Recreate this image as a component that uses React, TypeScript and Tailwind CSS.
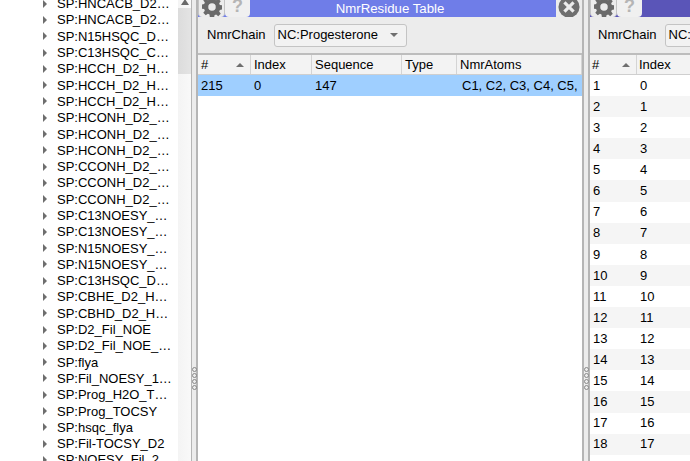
const font = "font-['Liberation_Sans',Arial,sans-serif]";

const tree = [
  "SP:HNCACB_D2…", "SP:HNCACB_D2…", "SP:N15HSQC_D…", "SP:C13HSQC_C…", "SP:HCCH_D2_H…", "SP:HCCH_D2_H…",
  "SP:HCCH_D2_H…", "SP:HCONH_D2_…", "SP:HCONH_D2_…", "SP:HCONH_D2_…", "SP:CCONH_D2_…", "SP:CCONH_D2_…",
  "SP:CCONH_D2_…", "SP:C13NOESY_…", "SP:C13NOESY_…", "SP:N15NOESY_…", "SP:N15NOESY_…", "SP:C13HSQC_D…",
  "SP:CBHE_D2_H…", "SP:CBHD_D2_H…", "SP:D2_Fil_NOE", "SP:D2_Fil_NOE_…", "SP:flya", "SP:Fil_NOESY_1…",
  "SP:Prog_H2O_T…", "SP:Prog_TOCSY", "SP:hsqc_flya", "SP:Fil-TOCSY_D2", "SP:NOESY_Fil_2",
];

function Gear({ className }: { className: string }) {
  return (
    <svg viewBox="0 0 24 24" className={className} fill="#6a6a6a">
      <path fillRule="evenodd" d="M9.500 0h5l.5 3.100 1.900.8L19.500 2l3 3-1.900 2.600.8 1.900 3.100.5v5l-3.100.5-.8 1.900 1.900 2.600-3 3-2.600-1.900-1.900.8-.5 3.100h-5L9 20.900l-1.900-.8L4.500 22l-3-3 1.900-2.600-.8-1.900L-.5 14V9l3.100-.5.8-1.900L1.500 4l3-2 2.600 1.900L9 3.100zM12 7.500a4.500 4.500 0 1 0 0 9 4.500 4.500 0 0 0 0-9z" />
    </svg>
  );
}

function Tabs() {
  return (
    <div className="flex h-[17px] w-[52px] shrink-0">
      <div className="flex h-full w-[27px] items-center justify-center rounded-b-sm border-x border-[#c4c4c4] bg-[#ececec]">
        <Gear className="-mt-[4px] h-[20px] w-[20px]" />
      </div>
      <div className="flex h-full w-[25px] items-start justify-center rounded-b-sm bg-[#f0f0f0] text-[18px] font-bold leading-none text-[#b5b5b5]">
        <span className="-mt-[3px]">?</span>
      </div>
    </div>
  );
}

function Handle() {
  return (
    <div className="flex w-[6px] flex-col items-center gap-[1px] pt-[367px]">
      <span className="h-[5px] w-[5px] rounded-full border border-[#8a8a8a]" />
      <span className="h-[5px] w-[5px] rounded-full border border-[#8a8a8a]" />
      <span className="h-[5px] w-[5px] rounded-full border border-[#8a8a8a]" />
      <span className="h-[5px] w-[5px] rounded-full border border-[#8a8a8a]" />
    </div>
  );
}

function Th({ label, w, sort }: { label: string; w: string; sort?: boolean }) {
  return (
    <div className={`${w} flex shrink-0 items-center justify-between border-r border-[#d4d4d4] pl-[3px] pr-[6px] text-[13px] text-black`}>
      <span>{label}</span>
      {sort && <span className="h-0 w-0 border-x-[4px] border-b-[4px] border-x-transparent border-b-[#6f6f6f]" />}
    </div>
  );
}

export default function App() {
  const rows = Array.from({ length: 18 }, (_, i) => i);
  return (
    <div className={`${font} flex h-[461px] w-[690px] overflow-hidden bg-white text-[13px] text-black`}>
      <div className="h-full w-[178px] shrink-0 overflow-hidden">
        <div className="-mt-[4.500px]">
          {tree.map((t, i) => (
            <div key={i} className="flex h-[16.300px] items-center whitespace-nowrap leading-none">
              <span className="ml-[43px] mr-[3px] h-0 w-0 border-y-[4px] border-l-[4px] border-y-transparent border-l-[#6e6e6e]" />
              <span className="ml-[7px]">{t}</span>
            </div>
          ))}
        </div>
      </div>
      <div className="flex h-full w-[13px] shrink-0 flex-col items-center bg-gradient-to-r from-[#f4f4f4] to-[#f9f9f9]">
        <span className="mt-[-1px] h-0 w-0 border-x-[4px] border-b-[6px] border-x-transparent border-b-[#6a6a6a]" />
        <div className="mt-[3px] h-[66px] w-full bg-gradient-to-r from-[#dcdcdc] to-[#e4e4e4]" />
      </div>
      <div className="flex h-full w-[7px] shrink-0 justify-center border-l border-r-2 border-[#b5b5b5] bg-[#ececec]">
        <Handle />
      </div>

      <div className="flex h-full w-[384px] shrink-0 flex-col bg-white">
        <div className="flex h-[17px] shrink-0 items-start bg-[#6f7de8]">
          <Tabs />
          <div className="flex h-[17px] flex-1 items-center justify-center pr-[26px] text-[13.250px] text-white">NmrResidue Table</div>
          <div className="flex h-[17px] w-[26px] shrink-0 items-start justify-center bg-[#ececec]">
            <svg viewBox="0 0 24 24" className="-mt-[4px] h-[22px] w-[22px]">
              <circle cx="12" cy="12" r="11.500" fill="#6f6f6f" />
              <path d="M7 7l10 10M17 7L7 17" stroke="#ececec" strokeWidth="3.500" />
            </svg>
          </div>
        </div>
        <div className="flex h-[38px] shrink-0 items-center border-b-2 border-[#bdbdbd] bg-[#ececec] pl-[9px]">
          <span>NmrChain</span>
          <div className="ml-[8px] flex h-[23px] w-[133px] items-center justify-between rounded-[3px] border border-[#c4c4c4] bg-[#f2f2f2] pl-[3px] pr-[8px]">
            <span>NC:Progesterone</span>
            <span className="h-0 w-0 border-x-[4px] border-t-[4px] border-x-transparent border-t-[#6f6f6f]" />
          </div>
        </div>
        <div className="flex h-[20px] shrink-0 border-b border-[#cfcfcf] bg-[#f3f3f3]">
          <Th label="#" w="w-[53px]" sort />
          <Th label="Index" w="w-[61px]" />
          <Th label="Sequence" w="w-[90px]" />
          <Th label="Type" w="w-[55px]" />
          <Th label="NmrAtoms" w="flex-1" />
        </div>
        <div className="flex h-[21px] shrink-0 items-center overflow-hidden whitespace-nowrap bg-[#9fcfff]">
          <span className="w-[53px] shrink-0 pl-[3px]">215</span>
          <span className="w-[61px] shrink-0 pl-[3px]">0</span>
          <span className="w-[90px] shrink-0 pl-[3px]">147</span>
          <span className="w-[55px] shrink-0" />
          <span className="pl-[5px]">C1, C2, C3, C4, C5,</span>
        </div>
      </div>

      <div className="flex h-full w-[8px] shrink-0 justify-center border-x-2 border-[#b5b5b5] bg-[#ececec]">
        <Handle />
      </div>

      <div className="flex h-full flex-1 flex-col bg-white">
        <div className="flex h-[17px] shrink-0 items-start bg-[#5a55b8]">
          <Tabs />
        </div>
        <div className="flex h-[38px] shrink-0 items-center overflow-hidden whitespace-nowrap border-b-2 border-[#bdbdbd] bg-[#ececec] pl-[8px]">
          <span>NmrChain</span>
          <div className="ml-[8px] flex h-[23px] w-[133px] shrink-0 items-center rounded-[3px] border border-[#c4c4c4] bg-[#f2f2f2] pl-[3px]">NC:Progesterone</div>
        </div>
        <div className="flex h-[20px] shrink-0 border-b border-[#cfcfcf] bg-[#f3f3f3]">
          <div className="flex w-[47px] shrink-0 items-center justify-between border-r border-[#d4d4d4] pl-[2px] pr-[6px]">
            <span>#</span>
            <span className="h-0 w-0 border-x-[4px] border-b-[4px] border-x-transparent border-b-[#6f6f6f]" />
          </div>
          <div className="flex flex-1 items-center pl-[2px]">Index</div>
        </div>
        {rows.map((i) => (
          <div key={i} className={`flex h-[21.100px] shrink-0 items-center ${i % 2 ? "bg-[#f5f5f5]" : "bg-white"}`}>
            <span className="w-[47px] shrink-0 pl-[3px]">{i + 1}</span>
            <span className="pl-[3px]">{i}</span>
          </div>
        ))}
      </div>
    </div>
  );
}
